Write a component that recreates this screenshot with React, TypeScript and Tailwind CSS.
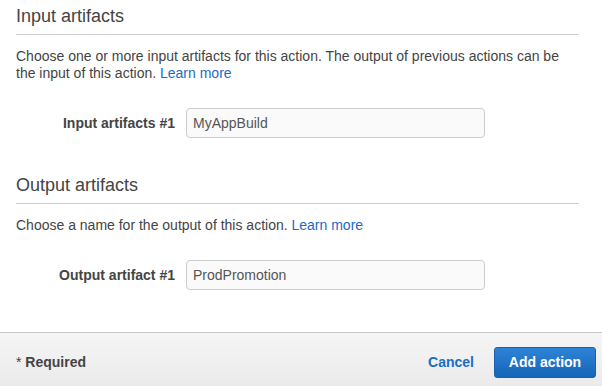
export default function App() {
  return (
    <div className="w-[602px] h-[386px] bg-white flex flex-col text-[#444] font-['Liberation_Sans',Arial,sans-serif] overflow-hidden">
      <div className="flex-1 pl-4 pr-[23px]">
        <Section
          title="Input artifacts"
          desc={
            <>
              Choose one or more input artifacts for this action. The output of previous actions can be the input of this action.{" "}
              <a className="text-[#1a6dc5]">Learn more</a>
            </>
          }
          label="Input artifacts #1"
          value="MyAppBuild"
        />
        <div className="h-[31px]" />
        <Section
          title="Output artifacts"
          desc={
            <>
              Choose a name for the output of this action. <a className="text-[#1a6dc5]">Learn more</a>
            </>
          }
          label="Output artifact #1"
          value="ProdPromotion"
        />
      </div>
      <div className="h-[54px] border-t border-[#c8c8c8] bg-gradient-to-b from-[#f5f5f5] to-[#ebebeb] pt-[14px] pl-4 pr-[6px]">
        <div className="h-[31px] flex items-center">
          <span className="text-[14px] font-bold text-[#444]">
            <span className="font-normal">*</span> Required
          </span>
          <div className="flex-1" />
          <button className="text-[14px] font-bold text-[#1a6dc5] mr-[20px]">Cancel</button>
          <button className="h-[31px] w-[102px] rounded-[3px] border border-[#1a5fa8] bg-gradient-to-b from-[#2e83d6] to-[#1565b8] text-white text-[14px] font-bold">
            Add action
          </button>
        </div>
      </div>
    </div>
  );
}

function Section({
  title,
  desc,
  label,
  value,
}: {
  title: string;
  desc: React.ReactNode;
  label: string;
  value: string;
}) {
  return (
    <div>
      <div className="pt-[4px] pb-[6px] border-b border-[#cccccc] text-[18px] leading-[24px] text-[#444]">{title}</div>
      <p className="mt-[13px] text-[14px] leading-[17px] text-[#444]">{desc}</p>
      <div className="mt-[26px] flex items-center">
        <div className="w-[159px] text-right text-[14px] font-bold text-[#444]">{label}</div>
        <div className="ml-[11px] w-[299px] h-[30px] rounded-[4px] border border-[#cccccc] bg-[#fafafa] flex items-center px-[6px] text-[14px] text-[#555]">
          {value}
        </div>
      </div>
    </div>
  );
}
